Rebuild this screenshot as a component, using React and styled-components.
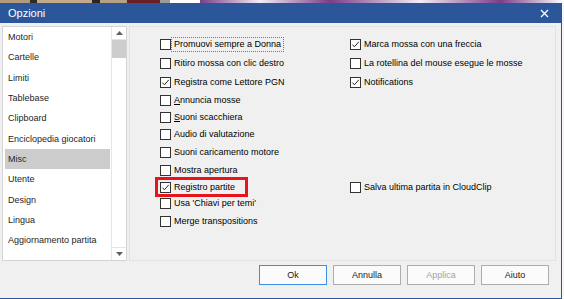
import React from 'react'
import styled, { createGlobalStyle } from 'styled-components'

const GlobalStyle = createGlobalStyle`
  html, body {
    margin: 0;
    padding: 0;
  }
  body {
    width: 564px;
    height: 299px;
    overflow: hidden;
    background: #f7f5f8;
    font-family: "Liberation Sans", Arial, sans-serif;
  }
`

const Screen = styled.div`
  width: 564px;
  height: 299px;
  display: flex;
  flex-direction: column;
  overflow: hidden;
`

const BackdropStrip = styled.div`
  height: 3px;
  flex: none;
  background: linear-gradient(90deg,
    #b49a7c 0, #b49a7c 30px, #2e2a28 30px, #2e2a28 37px,
    #c2aa8a 37px, #c2aa8a 92px, #2a2624 92px, #2a2624 100px,
    #b7a184 100px, #b7a184 127px, #6b1f25 127px, #6b1f25 160px,
    #9a9a9a 160px, #9a9a9a 170px, #ffffff 170px, #ffffff 200px,
    #7a3e8a 200px, #f3eef5 260px, #7a3e8a 330px, #f3eef5 420px, #7a3e8a 500px, #ffffff 564px);
`

const Window = styled.div`
  width: 561px;
  flex: 1;
  display: flex;
  flex-direction: column;
  background: #f0f0f0;
  border-right: 1px solid #2b579a;
  border-bottom: 1px solid #2b579a;
`

const TitleBar = styled.div`
  height: 20px;
  flex: none;
  display: flex;
  align-items: center;
  justify-content: space-between;
  padding: 0 12px 0 8px;
  background: #2b579a;
  color: #fff;
  font-size: 11px;
`

const CloseIcon = () => (
  <svg width="9" height="9" viewBox="0 0 9 9">
    <path d="M1 1L8 8M8 1L1 8" stroke="#fff" strokeWidth="1.3" />
  </svg>
)

const Content = styled.div`
  display: flex;
  gap: 2px;
  padding: 3px 0 0 2px;
  height: 235px;
`

const ListBox = styled.div`
  width: 125px;
  box-sizing: border-box;
  border: 1px solid #d4d4d4;
  background: #fff;
  display: flex;
`

const Items = styled.div`
  flex: 1;
  display: flex;
  flex-direction: column;
`

const Item = styled.div`
  height: 20.3px;
  flex: none;
  display: flex;
  align-items: center;
  margin: 0 1px 0 2px;
  padding-left: 3px;
  font-size: 9px;
  color: #1e1e1e;
  white-space: nowrap;
  background: ${p => (p.$selected ? '#cccccc' : 'transparent')};
`

const ScrollBar = styled.div`
  width: 15px;
  box-sizing: border-box;
  border-left: 1px solid #e6e6e6;
  display: flex;
  flex-direction: column;
`

const ScrollArrow = styled.div`
  height: 12px;
  flex: none;
  display: flex;
  align-items: center;
  justify-content: center;
  border-top: ${p => (p.$down ? '1px solid #e6e6e6' : 'none')};
  border-bottom: ${p => (p.$down ? 'none' : '1px solid #e6e6e6')};
`

const ScrollThumb = styled.div`
  height: 18px;
  flex: none;
  background: #cdcdcd;
`

const ScrollTrack = styled.div`
  flex: 1;
`

const Arrow = ({ down }) => (
  <svg width="7" height="4" viewBox="0 0 7 4">
    <path d={down ? 'M0 0H7L3.5 4Z' : 'M0 4H7L3.5 0Z'} fill="#606060" />
  </svg>
)

const Panel = styled.div`
  width: 427px;
  box-sizing: border-box;
  border: 1px solid #e2e2e2;
  padding: 7px 0 0 30px;
  display: grid;
  grid-template-columns: 190px 1fr;
  grid-template-rows: 20px 19px 19px 17px 17px 17px 19px 17px 16px 17px 18px;
  align-items: center;
  align-content: start;
`

const Option = styled.div`
  grid-column: ${p => p.$col};
  grid-row: ${p => p.$row};
  justify-self: start;
  position: relative;
  display: flex;
  align-items: center;
  font-size: 9px;
  color: #000;
  white-space: nowrap;

  ${p => p.$highlight && `
    &::after {
      content: '';
      position: absolute;
      left: -5px;
      top: -5px;
      width: 93px;
      height: 20px;
      box-sizing: border-box;
      border: 3px solid #e8141c;
    }
  `}
`

const Box = styled.span`
  width: 11px;
  height: 11px;
  box-sizing: border-box;
  flex: none;
  border: 1px solid #333;
  background: #fff;
  display: flex;
`

const Label = styled.span`
  margin-left: 2px;
  padding: 0 1px;
  line-height: 11px;
  outline: ${p => (p.$focused ? '1px dotted #777' : 'none')};
  outline-offset: 1px;
`

const Check = () => (
  <svg width="9" height="9" viewBox="0 0 9 9">
    <path d="M1.4 4.6L3.4 6.8L7.8 1.8" fill="none" stroke="#222" strokeWidth="1" />
  </svg>
)

const Footer = styled.div`
  display: flex;
  justify-content: flex-end;
  gap: 6px;
  padding: 4px 12px 0 0;
`

const Button = styled.div`
  width: 68px;
  height: 20px;
  box-sizing: border-box;
  display: flex;
  align-items: center;
  justify-content: center;
  font-size: 9px;
  background: #fbfbfb;
  border: 1px solid ${p => (p.$primary ? '#3a8ee6' : '#adadad')};
  color: ${p => (p.$disabled ? '#a3a3a3' : '#1a1a1a')};
`

const sections = [
  'Motori', 'Cartelle', 'Limiti', 'Tablebase', 'Clipboard',
  'Enciclopedia giocatori', 'Misc', 'Utente', 'Design', 'Lingua',
  'Aggiornamento partita',
]

const options = [
  { col: 1, row: 1, label: 'Promuovi sempre a Donna', focused: true },
  { col: 1, row: 2, label: 'Ritiro mossa con clic destro' },
  { col: 1, row: 3, label: 'Registra come Lettore PGN', checked: true },
  { col: 1, row: 4, label: <><u>A</u>nnuncia mosse</> },
  { col: 1, row: 5, label: <><u>S</u>uoni scacchiera</> },
  { col: 1, row: 6, label: 'Audio di valutazione' },
  { col: 1, row: 7, label: 'Suoni caricamento motore' },
  { col: 1, row: 8, label: 'Mostra apertura' },
  { col: 1, row: 9, label: 'Registro partite', checked: true, highlight: true },
  { col: 1, row: 10, label: "Usa 'Chiavi per temi'" },
  { col: 1, row: 11, label: 'Merge transpositions' },
  { col: 2, row: 1, label: 'Marca mossa con una freccia', checked: true },
  { col: 2, row: 2, label: 'La rotellina del mouse esegue le mosse' },
  { col: 2, row: 3, label: 'Notifications', checked: true },
  { col: 2, row: 9, label: 'Salva ultima partita in CloudClip' },
]

const App = () => (
  <Screen>
    <GlobalStyle />
    <BackdropStrip />
    <Window>
      <TitleBar>
        <span>Opzioni</span>
        <CloseIcon />
      </TitleBar>
      <Content>
        <ListBox>
          <Items>
            {sections.map(s => (
              <Item key={s} $selected={s === 'Misc'}>{s}</Item>
            ))}
          </Items>
          <ScrollBar>
            <ScrollArrow><Arrow /></ScrollArrow>
            <ScrollThumb />
            <ScrollTrack />
            <ScrollArrow $down><Arrow down /></ScrollArrow>
          </ScrollBar>
        </ListBox>
        <Panel>
          {options.map((o, i) => (
            <Option key={i} $col={o.col} $row={o.row} $highlight={o.highlight}>
              <Box>{o.checked && <Check />}</Box>
              <Label $focused={o.focused}>{o.label}</Label>
            </Option>
          ))}
        </Panel>
      </Content>
      <Footer>
        <Button $primary>Ok</Button>
        <Button>Annulla</Button>
        <Button $disabled>Applica</Button>
        <Button>Aiuto</Button>
      </Footer>
    </Window>
  </Screen>
)

export default App
